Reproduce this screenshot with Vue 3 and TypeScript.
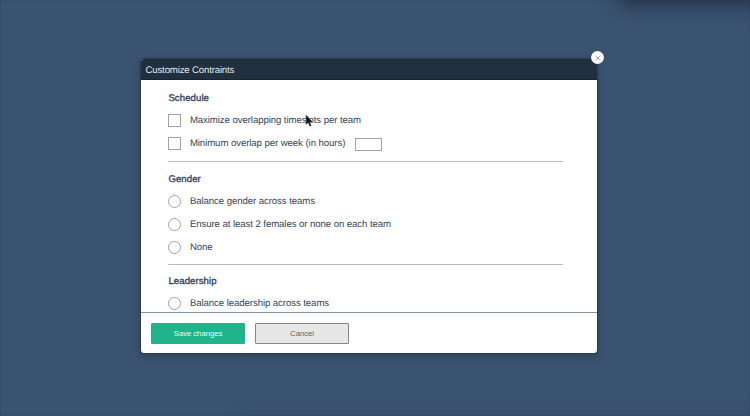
<script setup lang="ts">
interface Option {
  label: string
  kind: 'checkbox' | 'radio'
  hasInput?: boolean
}
interface Section {
  title: string
  options: Option[]
}

const sections: Section[] = [
  {
    title: 'Schedule',
    options: [
      { label: 'Maximize overlapping timeslots per team', kind: 'checkbox' },
      { label: 'Minimum overlap per week (in hours)', kind: 'checkbox', hasInput: true },
    ],
  },
  {
    title: 'Gender',
    options: [
      { label: 'Balance gender across teams', kind: 'radio' },
      { label: 'Ensure at least 2 females or none on each team', kind: 'radio' },
      { label: 'None', kind: 'radio' },
    ],
  },
  {
    title: 'Leadership',
    options: [{ label: 'Balance leadership across teams', kind: 'radio' }],
  },
]
</script>

<template>
  <main class="backdrop">
    <div class="top-shade"></div>
    <div class="bottom-shade"></div>
    <div class="modal" role="dialog">
      <header class="header">Customize Contraints</header>
      <div class="body">
        <section v-for="section in sections" :key="section.title" class="section">
          <h2 class="title">{{ section.title }}</h2>
          <label v-for="option in section.options" :key="option.label" class="option">
            <span class="control" :class="option.kind"></span>
            <span class="label">{{ option.label }}</span>
            <input v-if="option.hasInput" class="hours" type="text" />
          </label>
        </section>
      </div>
      <footer class="footer">
        <button class="button save">Save changes</button>
        <button class="button cancel">Cancel</button>
      </footer>
      <button class="close" aria-label="Close">
        <svg width="6" height="6" viewBox="0 0 6 6">
          <path d="M.6 .8L5.4 5.2M5.4 .8L.6 5.2" stroke="#858b91" stroke-width=".8" fill="none" />
        </svg>
      </button>
    </div>
    <svg class="pointer" width="9" height="14" viewBox="0 0 9 14">
      <path
        d="M.8 .4V10.8L3.1 8.9L4.6 12.5L6.5 11.7L5 8.2H8.1Z"
        fill="#101820"
        stroke="#d5d9df"
        stroke-width=".4"
      />
    </svg>
  </main>
</template>

<style>
body {
  background: #3a5370;
}
</style>

<style scoped>
.backdrop {
  position: relative;
  box-sizing: border-box;
  width: 750px;
  height: 416px;
  padding: 59px 0 0 141px;
  overflow: hidden;
  background: #3a5370;
  box-shadow: inset 0 0 2px #2c4564;
  font-family: "Liberation Sans", Arial, sans-serif;
  color: #34465a;
  text-rendering: geometricPrecision;
}
.top-shade {
  position: absolute;
  top: -20px;
  left: 622px;
  width: 160px;
  height: 20px;
  box-shadow: 0 2px 18px 3px #233246;
}
.bottom-shade {
  position: absolute;
  top: 420px;
  left: 245px;
  width: 540px;
  height: 20px;
  box-shadow: 0 0 18px 2px rgba(45, 68, 90, 0.6);
}
.modal {
  position: relative;
  display: flex;
  flex-direction: column;
  width: 456px;
  height: 294px;
  border-radius: 3px;
  background: #fefeff;
  box-shadow: 0 0 1px 0.5px #2a3d50, 0 3px 9px rgba(25, 42, 60, 0.45);
}
.header {
  box-sizing: border-box;
  flex: none;
  height: 21px;
  padding-left: 4.5px;
  border-bottom: 1px solid #17233a;
  border-radius: 3px 3px 0 0;
  background: #222f3f;
  color: #e3e8ed;
  font-size: 9.6px;
  letter-spacing: -0.15px;
  line-height: 24px;
}
.body {
  flex: 1;
  min-height: 0;
  overflow: hidden;
  padding: 9px 34px 0 27.4px;
}
.section {
  box-sizing: border-box;
  display: flex;
  flex-direction: column;
  height: 73px;
  border-bottom: 1px solid #b9bcc0;
}
.section + .section {
  height: 103px;
  padding-top: 8px;
}
.section:last-child {
  padding-top: 7px;
}
.title {
  flex: none;
  height: 20px;
  margin: 0;
  font-size: 9.6px;
  font-weight: normal;
  -webkit-text-stroke: 0.35px currentColor;
  letter-spacing: 0.08px;
  line-height: 20px;
}
.section + .section .title {
  height: 19.5px;
  line-height: 20px;
}
.option {
  display: flex;
  flex: none;
  align-items: center;
  height: 23px;
  font-size: 9.6px;
  letter-spacing: -0.07px;
}
.control {
  box-sizing: border-box;
  flex: none;
  width: 13px;
  height: 13px;
  margin-right: 8.5px;
  border: 1px solid #a0a3a7;
  background: #fefeff;
}
.radio {
  border-radius: 50%;
}
.hours {
  box-sizing: border-box;
  width: 27px;
  height: 13px;
  margin: 2px 0 0 9.6px;
  padding: 0;
  border: 1px solid #a0a3a7;
  border-radius: 0;
  background: #fefeff;
}
.footer {
  box-sizing: border-box;
  display: flex;
  flex: none;
  gap: 10px;
  height: 41px;
  padding: 10px 10px 0;
  border-top: 1px solid #82929c;
}
.button {
  box-sizing: border-box;
  width: 94px;
  height: 21px;
  padding: 0;
  border: 1px solid #1db489;
  border-radius: 1px;
  font-family: inherit;
  font-size: 7.8px;
  letter-spacing: -0.08px;
  line-height: 20px;
}
.save {
  background: #1fb48c;
  color: #e0fff6;
}
.cancel {
  border-color: #85888b;
  background: #e7e7e8;
  color: #5b6067;
}
.close {
  position: absolute;
  top: -8px;
  right: -7px;
  display: flex;
  align-items: center;
  justify-content: center;
  width: 13px;
  height: 13px;
  padding: 0;
  border: 0;
  border-radius: 50%;
  background: #fdfeff;
  box-shadow: 0 0 1px #1f344b;
}
.pointer {
  position: absolute;
  top: 114px;
  left: 305px;
}
</style>
